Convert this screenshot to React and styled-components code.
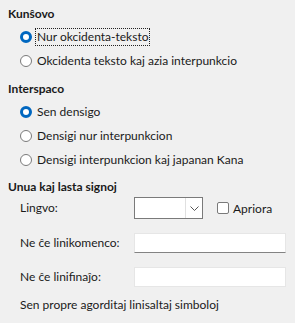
import React from 'react'
import styled, { createGlobalStyle } from 'styled-components'

const Global = createGlobalStyle`
  html, body {
    margin: 0;
    padding: 0;
    background: #f0f0f0;
  }
  body {
    font-family: Lato, "Noto Sans", sans-serif;
    font-size: 12px;
    color: #1a1a1a;
  }
`

const Page = styled.div`
  width: 295px;
  height: 323px;
  box-sizing: border-box;
  padding: 6px 8px 0 8px;
  display: flex;
  flex-direction: column;
`

const Heading = styled.div`
  font-weight: bold;
  height: 16px;
  line-height: 16px;
  margin-top: ${p => p.top || 0}px;
`

const RadioList = styled.div`
  display: flex;
  flex-direction: column;
  padding-left: 12px;
  margin-top: 7px;
  gap: 8px;
`

const RadioRow = styled.label`
  display: flex;
  align-items: center;
  gap: 4px;
  height: 16px;
  line-height: 16px;
`

const RadioDot = styled.span`
  width: 12px;
  height: 12px;
  box-sizing: border-box;
  border-radius: 50%;
  flex: none;
  border: ${p => (p.checked ? '3.5px solid #0067c0' : '1px solid #7a7a7a')};
  background: #fff;
`

const RadioText = styled.span`
  padding: 0 1px;
  outline: ${p => (p.focus ? '1px dotted #222' : 'none')};
  outline-offset: 0;
`

const FormGrid = styled.div`
  display: grid;
  grid-template-columns: 114px 1fr;
  padding-left: 12px;
  margin-top: 2px;
  row-gap: 14px;
  align-items: center;
`

const Label = styled.div`
  line-height: 16px;
`

const LangRow = styled.div`
  display: flex;
  align-items: center;
  gap: 14px;
`

const Combo = styled.div`
  width: 69px;
  height: 22px;
  box-sizing: border-box;
  border: 1px solid #7a7a7a;
  background: #fff;
  display: flex;
  justify-content: flex-end;
`

const ComboButton = styled.div`
  width: 16px;
  height: 100%;
  border-left: 1px solid #e0e0e0;
  display: flex;
  align-items: center;
  justify-content: center;
`

const CheckRow = styled.label`
  display: flex;
  align-items: center;
  gap: 4px;
`

const CheckBox = styled.span`
  width: 12px;
  height: 12px;
  box-sizing: border-box;
  border: 1px solid #7a7a7a;
  border-radius: 2px;
  background: #fff;
`

const TextBox = styled.div`
  width: 152px;
  height: 20px;
  box-sizing: border-box;
  background: #fff;
  border: 1px solid #e6e6e6;
  border-bottom: 1px solid ${p => (p.active ? '#838383' : '#e6e6e6')};
`

const Note = styled.div`
  padding-left: 12px;
  margin-top: 10px;
  line-height: 16px;
`

const Radio = ({ checked, focus, children }) => (
  <RadioRow>
    <RadioDot checked={checked} />
    <RadioText focus={focus}>{children}</RadioText>
  </RadioRow>
)

export default function App() {
  return (
    <Page>
      <Global />
      <Heading>Kunŝovo</Heading>
      <RadioList>
        <Radio checked focus>Nur okcidenta-teksto</Radio>
        <Radio>Okcidenta teksto kaj azia interpunkcio</Radio>
      </RadioList>

      <Heading top={12}>Interspaco</Heading>
      <RadioList>
        <Radio checked>Sen densigo</Radio>
        <Radio>Densigi nur interpunkcion</Radio>
        <Radio>Densigi interpunkcion kaj japanan Kana</Radio>
      </RadioList>

      <Heading top={11}>Unua kaj lasta signoj</Heading>
      <FormGrid>
        <Label>Lingvo:</Label>
        <LangRow>
          <Combo>
            <ComboButton>
              <svg width="9" height="5" viewBox="0 0 9 5">
                <path d="M0.5 0.5 L4.5 4.5 L8.5 0.5" fill="none" stroke="#555" strokeWidth="1" />
              </svg>
            </ComboButton>
          </Combo>
          <CheckRow>
            <CheckBox />
            <span>Apriora</span>
          </CheckRow>
        </LangRow>
        <Label>Ne ĉe linikomenco:</Label>
        <TextBox active />
        <Label>Ne ĉe linifinaĵo:</Label>
        <TextBox />
      </FormGrid>
      <Note>Sen propre agorditaj linisaltaj simboloj</Note>
    </Page>
  )
}
